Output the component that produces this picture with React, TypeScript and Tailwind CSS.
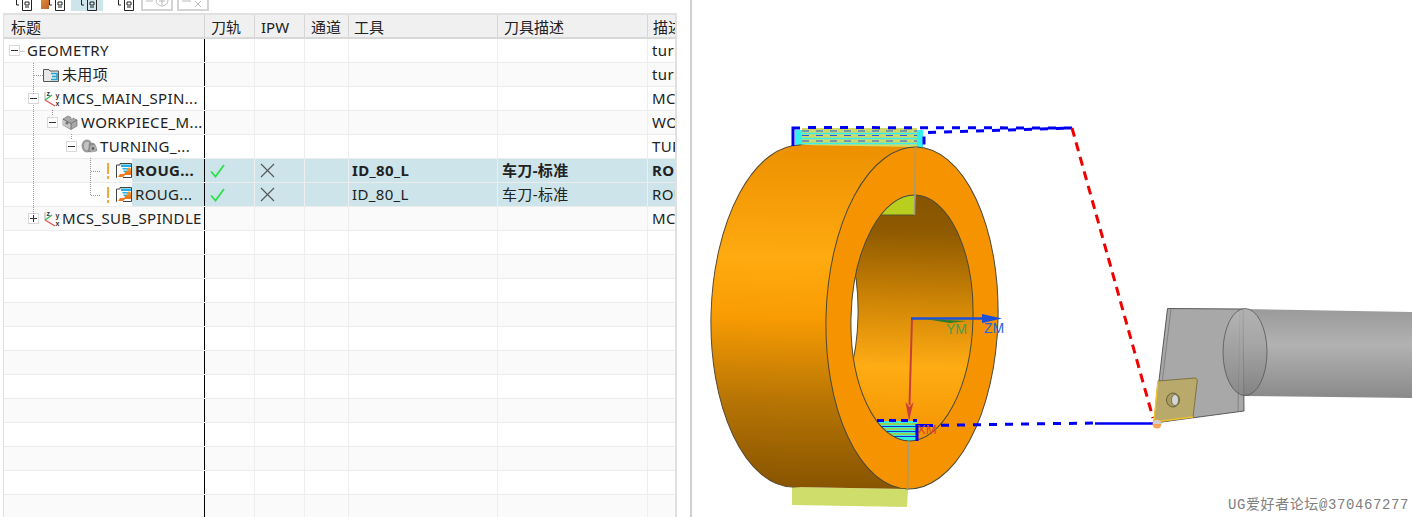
const font = "font-['Noto_Sans','Noto_Sans_CJK_SC',sans-serif]";

function Box({ plus }: { plus?: boolean }) {
  return (
    <svg width="11" height="11" viewBox="0 0 11 11" className="shrink-0">
      <rect x="0.5" y="0.5" width="10" height="10" fill="#fff" stroke="#d8d8d8" />
      <path d={plus ? "M2 5.5H9M5.5 2V9" : "M2 5.5H9"} stroke="#333" strokeWidth="1" />
    </svg>
  );
}

function Folder() {
  return (
    <svg width="16" height="15" viewBox="0 0 16 15" className="shrink-0">
      <path d="M.5 2.5H6L7 4H15.5V14.5H.5Z" fill="#e8e8e8" stroke="#555" />
      <path d="M8 6.500H14V12.500H8M9 9.500H14" fill="none" stroke="#22a5cf" strokeWidth="1.600" />
    </svg>
  );
}

function Axes() {
  return (
    <svg width="16" height="17" viewBox="0 0 16 17" className="shrink-0">
      <path d="M1 10L8 5" stroke="#3ab54a" strokeWidth="1.300" />
      <path d="M1 10L11 16" stroke="#e8505a" strokeWidth="1.300" />
      <path d="M1 2V10" stroke="#9a9a9a" strokeWidth="0.800" />
      <text x="2.500" y="6" fontSize="7" fill="#333" fontWeight="700" fontFamily="Liberation Sans">z</text>
      <text x="11.500" y="8" fontSize="7" fill="#333" fontWeight="700" fontFamily="Liberation Sans">y</text>
      <text x="11.500" y="16" fontSize="7" fill="#333" fontWeight="700" fontFamily="Liberation Sans">x</text>
    </svg>
  );
}

function Workpiece() {
  return (
    <svg width="16" height="15" viewBox="0 0 16 15" className="shrink-0">
      <path d="M1 4L6 1L9 2.500V5L11 4V3L15 5V11L9 14.500L1 10Z" fill="#a9a9a9" stroke="#777" strokeWidth="0.700" />
      <path d="M1 4.500L9 9V14L1 10Z" fill="#c7c7c7" />
      <path d="M1 4L9 8.500V14.500M9 8.500L15 5" fill="none" stroke="#666" strokeWidth="0.800" />
      <circle cx="5" cy="8" r="1.600" fill="#777" />
    </svg>
  );
}

function Turning() {
  return (
    <svg width="17" height="15" viewBox="0 0 17 15" className="shrink-0">
      <ellipse cx="6" cy="7" rx="5.500" ry="6.500" fill="#9a9a9a" />
      <ellipse cx="6" cy="7" rx="3" ry="4" fill="#c4c4c4" />
      <path d="M8 4H13Q16 7 16 12Q12 14 7 13Z" fill="#8b8b8b" />
      <ellipse cx="12" cy="9.500" rx="3" ry="3.500" fill="#b4b4b4" />
      <ellipse cx="12" cy="9.500" rx="1.400" ry="1.700" fill="#666" />
    </svg>
  );
}

function Op() {
  return (
    <svg width="16" height="17" viewBox="0 0 16 17" className="shrink-0">
      <path d="M1 15.500H.5V3H4V1.500H15.500V15.500H7" fill="#fff" stroke="#444" />
      <path d="M5 2.500H15V5H5ZM6.500 6H13.500V7.500H6.500ZM7.500 8.500H12V10H7.500Z" fill="#25aee0" />
      <path d="M2 15L4 12H8L9.500 9.500L15 8V13H9L7 15Z" fill="#ee7a1a" />
      <circle cx="13" cy="7.500" r="2" fill="#f0902a" />
    </svg>
  );
}

function Excl() {
  return (
    <span className="w-[3px] h-[16px] flex flex-col justify-between items-center shrink-0">
      <span className="w-[2px] h-[11px] bg-[#f5a83c]" />
      <span className="w-[2px] h-[3px] bg-[#f5a83c]" />
    </span>
  );
}

function Check() {
  return (
    <svg width="15" height="14" viewBox="0 0 15 14">
      <path d="M1 7.500L5.500 12.500L14 1" fill="none" stroke="#2fe04a" strokeWidth="1.800" />
    </svg>
  );
}

function Cross() {
  return (
    <svg width="15" height="15" viewBox="0 0 15 15">
      <path d="M1 1L14 14M14 1L1 14" stroke="#555" strokeWidth="1.100" />
    </svg>
  );
}

const colClasses = [
  "w-[201px] border-r border-r-black",
  "w-[50px]",
  "w-[50px]",
  "w-[44px]",
  "w-[149px]",
  "w-[150px]",
  "w-[27px]",
];

type Row = {
  title?: React.ReactNode;
  desc?: string;
  selected?: boolean;
  bold?: boolean;
  tool?: string;
  toolDesc?: string;
  marks?: boolean;
};

const rows: Row[] = [
  { desc: "turning", title: <div className="flex items-center pl-[5px] h-full"><Box /><span className="ml-[7px]">GEOMETRY</span></div> },
  { desc: "turning", title: <div className="flex items-center pl-[39px] h-full"><Folder /><span className="ml-[3px]">未用项</span></div> },
  { desc: "MCS", title: <div className="flex items-center pl-[24px] h-full"><Box /><span className="ml-[5px] flex"><Axes /></span><span className="ml-[2px]">MCS_MAIN_SPIN...</span></div> },
  { desc: "WORKPIECE", title: <div className="flex items-center pl-[43px] h-full"><Box /><span className="ml-[4px] flex"><Workpiece /></span><span className="ml-[3px]">WORKPIECE_M...</span></div> },
  { desc: "TURNING", title: <div className="flex items-center pl-[62px] h-full"><Box /><span className="ml-[4px] flex"><Turning /></span><span className="ml-[2px]">TURNING_...</span></div> },
  { desc: "ROUGH", selected: true, bold: true, marks: true, tool: "ID_80_L", toolDesc: "车刀-标准", title: "ROUG..." },
  { desc: "ROUGH", selected: true, marks: true, tool: "ID_80_L", toolDesc: "车刀-标准", title: "ROUG..." },
  { desc: "MCS", title: <div className="flex items-center pl-[24px] h-full"><Box plus /><span className="ml-[5px] flex"><Axes /></span><span className="ml-[2px]">MCS_SUB_SPINDLE</span></div> },
  ...Array.from({ length: 12 }, () => ({})),
];

function TableRow({ row, index }: { row: Row; index: number }) {
  const zebra = index % 2 === 0 ? "bg-white" : "bg-[#fafafa]";
  const bg = row.selected ? "bg-[#cce4ea]" : zebra;
  const weight = row.bold ? "font-bold" : "font-normal";
  const sep = "border-r border-r-[#eeeeee]";
  return (
    <div className={`flex h-[24px] shrink-0 border-b border-b-[#ececec] text-[15px] tracking-[0.35px] leading-[23px] text-[#222] ${weight}`}>
      <div className={`${colClasses[0]} h-[23px] whitespace-nowrap overflow-hidden ${zebra}`}>
        {row.selected ? (
          <div className="flex h-full items-center pl-[102px]">
            <Excl />
            <span className="ml-[7px] flex"><Op /></span>
            <span className={`${bg} h-full flex-1 pl-[3px]`}>{row.title}</span>
          </div>
        ) : row.title}
      </div>
      <div className={`${colClasses[1]} ${bg} ${sep} flex items-center pl-[5px]`}>{row.marks && <Check />}</div>
      <div className={`${colClasses[2]} ${bg} ${sep} flex items-center pl-[5px]`}>{row.marks && <Cross />}</div>
      <div className={`${colClasses[3]} ${bg} ${sep}`} />
      <div className={`${colClasses[4]} ${bg} ${sep} pl-[3px]`}>{row.tool}</div>
      <div className={`${colClasses[5]} ${bg} ${sep} pl-[4px]`}>{row.toolDesc}</div>
      <div className={`${colClasses[6]} ${bg} pl-[4px] overflow-hidden whitespace-nowrap`}>{row.desc}</div>
    </div>
  );
}

function Header() {
  const labels = ["标题", "刀轨", "IPW", "通道", "工具", "刀具描述", "描述"];
  const widths = ["w-[201px] pl-[7px]", "w-[50px] pl-[6px]", "w-[50px] pl-[6px]", "w-[44px] pl-[6px]", "w-[149px] pl-[5px]", "w-[150px] pl-[6px]", "w-[27px] pl-[5px]"];
  return (
    <div className="flex h-[24px] shrink-0 bg-[#f0f0f0] border-b-2 border-b-[#d8d8d8] text-[15px] leading-[24px] text-[#222]">
      {labels.map((l, i) => (
        <div key={l} className={`${widths[i]} overflow-hidden whitespace-nowrap ${i < 6 ? "border-r border-r-[#d6d6d6]" : ""}`}>{l}</div>
      ))}
    </div>
  );
}

function TreeLines() {
  return (
    <svg className="absolute left-0 top-[24px]" width="201" height="200" viewBox="4 39 201 200">
      <g stroke="#999" strokeDasharray="1 1" fill="none" strokeWidth="1">
        <path d="M20.500 51.500H25M33.500 63V94M33.500 105V215M34 75.500H43" />
        <path d="M52.500 110V116M71.500 134V140" />
        <path d="M90.500 158V195.500H100M91 171.500H100" />
      </g>
    </svg>
  );
}

function ToolIcon() {
  return (
    <svg width="16" height="11" viewBox="0 0 16 11" className="shrink-0">
      <path d="M.5 0V5H3M6.500 0V10.500H15.500V0" fill="none" stroke="#222" />
      <path d="M9 2H13V5H9ZM9 7H13" fill="none" stroke="#222" />
    </svg>
  );
}

function Toolbar() {
  return (
    <div className="flex h-[13px] pl-[16px]">
      <div className="h-[11px] flex"><ToolIcon /></div>
      <div className="h-[11px] flex ml-[9px]">
        <span className="w-[8px] h-[9px] bg-gradient-to-br from-[#e88a34] to-[#b8622a]" />
        <ToolIcon />
      </div>
      <div className="w-[32px] h-[11px] bg-[#cce4ea] ml-[6px] flex justify-end pr-[6px]">
        <ToolIcon />
      </div>
      <div className="h-[11px] flex ml-[15px] w-[16px]"><ToolIcon /></div>
      <div className="w-[32px] h-[11px] ml-[7px] border-2 border-t-0 border-[#d4d4d4] flex items-start justify-center">
        <svg width="24" height="8" viewBox="0 0 24 8"><path d="M1 1H8" stroke="#bbb" /><circle cx="17" cy="0" r="6" fill="none" stroke="#bbb" /><path d="M17 0V5M14 1H20" stroke="#bbb" /></svg>
      </div>
      <div className="w-[32px] h-[11px] ml-[4px] border-2 border-t-0 border-[#d4d4d4] flex items-start justify-center">
        <svg width="24" height="8" viewBox="0 0 24 8"><path d="M1 1H10M14 1L20 7M20 1L14 7" stroke="#bbb" /></svg>
      </div>
    </div>
  );
}

function Viewport() {
  return (
    <svg className="flex-1 h-full" viewBox="692 0 720 517">
      <defs>
        <linearGradient id="body" gradientUnits="userSpaceOnUse" x1="0" y1="145" x2="0" y2="489">
          <stop offset="0" stopColor="#ec9000" />
          <stop offset="0.33" stopColor="#ffaa10" />
          <stop offset="0.5" stopColor="#f99c03" />
          <stop offset="0.75" stopColor="#b67404" />
          <stop offset="1" stopColor="#875400" />
        </linearGradient>
        <linearGradient id="inner" gradientUnits="userSpaceOnUse" x1="0" y1="195" x2="0" y2="441">
          <stop offset="0" stopColor="#875400" />
          <stop offset="0.15" stopColor="#8f5a00" />
          <stop offset="0.45" stopColor="#d28706" />
          <stop offset="0.7" stopColor="#ffac14" />
          <stop offset="1" stopColor="#f29300" />
        </linearGradient>
        <linearGradient id="shaft" gradientUnits="userSpaceOnUse" x1="0" y1="310" x2="0" y2="397">
          <stop offset="0" stopColor="#9b9b9b" />
          <stop offset="0.4" stopColor="#b2b2b2" />
          <stop offset="1" stopColor="#8a8a8a" />
        </linearGradient>
        <linearGradient id="cap" gradientUnits="userSpaceOnUse" x1="0" y1="310" x2="0" y2="396">
          <stop offset="0" stopColor="#b8b8b8" />
          <stop offset="1" stopColor="#808080" />
        </linearGradient>
        <clipPath id="holeClip">
          <ellipse cx="912" cy="318" rx="61" ry="123" transform="rotate(1.5 912 318)" />
        </clipPath>
      </defs>

      {/* top stock */}
      <rect x="795" y="130" width="128" height="17" fill="#35f0ec" />
      <rect x="802" y="128" width="115" height="19" fill="#cfd968" />
      <path d="M795 133.500H923M795 138.500H923M795 143.500H923" stroke="#35f0ec" strokeWidth="1.500" />
      <path d="M802 135.500H917M802 141H917M802 131H917" stroke="#2a55e0" strokeWidth="1.200" strokeDasharray="7 7" />

      {/* bottom stock */}
      <path d="M792 487L908 489L907 507L792 505Z" fill="#cfde6b" />

      {/* ring */}
      <ellipse cx="797" cy="316" rx="86" ry="171" transform="rotate(1.5 797 316)" fill="url(#body)" stroke="#5a4a30" strokeWidth="1" />
      <path d="M801 145L916 147L907.500 489L793 487Z" fill="url(#body)" />
      <ellipse cx="912" cy="318" rx="86" ry="171" transform="rotate(1.5 912 318)" fill="#f59300" stroke="#4a4a3a" strokeWidth="1" />
      <ellipse cx="912" cy="318" rx="61" ry="123" transform="rotate(1.5 912 318)" fill="url(#inner)" />
      <g clipPath="url(#holeClip)">
        <ellipse cx="797" cy="316" rx="61" ry="123" transform="rotate(1.5 797 316)" fill="#fff" stroke="#4a4a3a" strokeWidth="1" />
        <path d="M870 215H914L916 190H870Z" fill="#b9cf20" />
        <path d="M880 215H914" stroke="#55552f" strokeWidth="1" />
        <path d="M878 421L918 421L918 442L878 442Z" fill="#33efe0" />
        <path d="M878 424H918M878 429H918M878 434H918" stroke="#b5c62f" strokeWidth="1.500" />
        <path d="M878 426.500H916M878 431.500H916M878 436.500H916" stroke="#1531d0" strokeWidth="1" />
      </g>
      <ellipse cx="912" cy="318" rx="61" ry="123" transform="rotate(1.5 912 318)" fill="none" stroke="#4a4a3a" strokeWidth="1" />
      <path d="M915.500 147L914.500 215M908.500 441L907.500 489" stroke="#a39c7d" strokeWidth="1.500" />

      {/* tool path */}
      <path d="M793 146V128H800" fill="none" stroke="#0000f0" strokeWidth="3" />
      <path d="M808 127.500L1072 128L924 132.500V147" fill="none" stroke="#0000f0" strokeWidth="3" strokeDasharray="8 8" />
      <path d="M1072 128L1153 418" stroke="#f00000" strokeWidth="3" strokeDasharray="9 6" />
      <path d="M917 441V425.500H925" fill="none" stroke="#0000f0" strokeWidth="3" />
      <path d="M925 425.500L1095 423" fill="none" stroke="#0000f0" strokeWidth="3" strokeDasharray="8 8" />
      <path d="M1095 423.500H1155" stroke="#0000f0" strokeWidth="2.500" />
      <path d="M877 420.500H917" stroke="#0000f0" strokeWidth="3" strokeDasharray="7 5" />

      {/* axes */}
      <path d="M912 318L909.500 405" stroke="#c6403a" strokeWidth="2" />
      <path d="M905.500 402L909 421L913.500 402L909.500 407Z" fill="#c9403a" />
      <path d="M911 318.500H985" stroke="#1c50d8" strokeWidth="2.500" />
      <path d="M982 314L1002 318.500L982 323Z" fill="#1c50d8" />
      <path d="M925 319L966 321L950 323Z" fill="#2a7a30" />
      <text x="946" y="334" fontSize="14" fill="#4a9e4a" fontFamily="Liberation Sans">YM</text>
      <text x="984" y="333" fontSize="14" fill="#2a62e0" fontFamily="Liberation Sans">ZM</text>
      <text x="917" y="434" fontSize="13" fill="#d8432c" fontFamily="Liberation Sans">XM</text>

      {/* tool */}
      <path d="M1243 309L1412 312V398L1243 396Z" fill="url(#shaft)" />
      <path d="M1167.500 308.500L1243 309L1244 411L1154 423Z" fill="#a8a8a8" stroke="#4d4d4d" strokeWidth="0.900" />
      <path d="M1171 309L1160 400M1240 309L1238 411" stroke="#777" strokeWidth="0.800" fill="none" />
      <ellipse cx="1245" cy="352" rx="22" ry="43.500" fill="url(#cap)" stroke="#555" strokeWidth="0.800" fillOpacity="0.750" />
      <path d="M1158 381L1195 378Q1198 378 1197 383L1193 417L1154 423Z" fill="#b9aa6c" stroke="#6d6434" strokeWidth="0.800" />
      <path d="M1158 381L1154 422L1193 417" fill="none" stroke="#f2c332" strokeWidth="1.500" />
      <ellipse cx="1173" cy="400" rx="6.500" ry="7" fill="#a99a60" stroke="#55502c" strokeWidth="0.800" />
      <ellipse cx="1175" cy="400" rx="3.500" ry="5.500" fill="#d5d5d5" stroke="#55502c" strokeWidth="0.600" />
      <circle cx="1157" cy="424" r="4.500" fill="#f9a558" />
      <path d="M1153 424A4 4 0 0 1 1161 424Z" fill="#cfcfcf" />
    </svg>
  );
}

export default function App() {
  return (
    <div className={`relative flex w-[1412px] h-[517px] overflow-hidden bg-white ${font}`}>
      <div className="w-[692px] h-full shrink-0 border-r-2 border-r-[#cfcfcf] overflow-hidden">
        <Toolbar />
        <div className="relative ml-[3px] w-[674px] h-[504px] border-t-2 border-l border-r-2 border-[#e0e0e0] overflow-hidden flex flex-col">
          <Header />
          {rows.map((r, i) => <TableRow key={i} row={r} index={i} />)}
          <TreeLines />
        </div>
      </div>
      <Viewport />
      <div className="absolute right-[3px] bottom-[3px] text-[14px] leading-[18px] tracking-[0.6px] text-[#808080] font-['Liberation_Mono','Noto_Sans_CJK_SC',monospace] whitespace-nowrap">UG爱好者论坛@370467277</div>
    </div>
  );
}
